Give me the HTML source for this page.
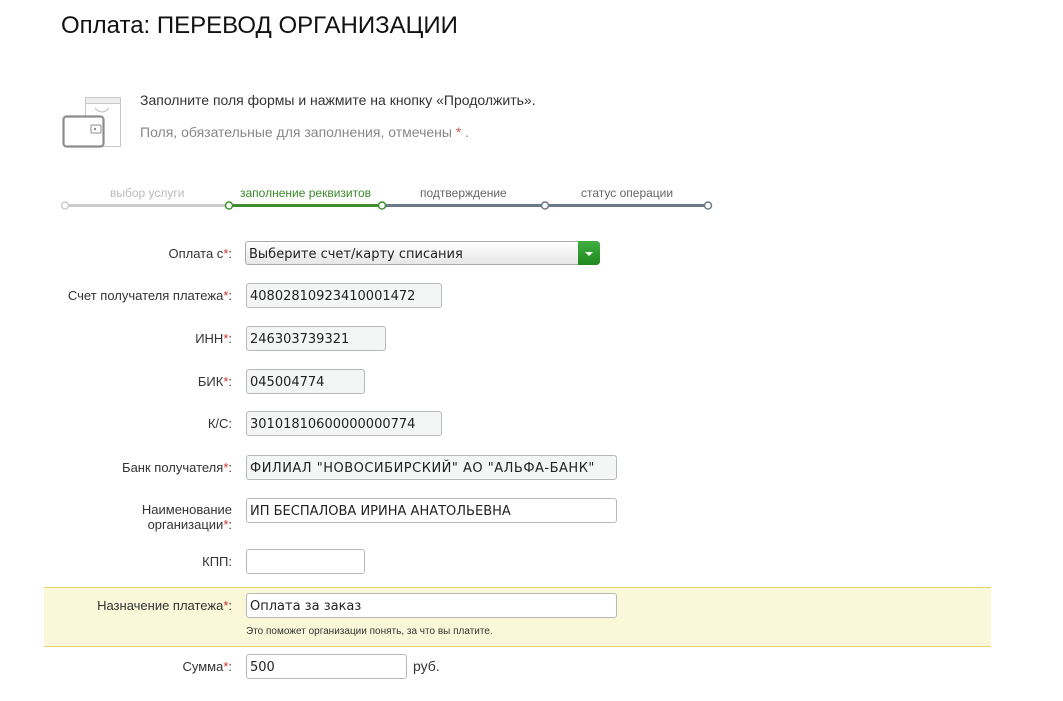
<!DOCTYPE html>
<html><head><meta charset="utf-8">
<style>
body{margin:0;width:1063px;height:701px;background:#fff;font-family:"Liberation Sans",sans-serif;position:relative;overflow:hidden;color:#333}
.a{position:absolute}
.lbl{position:absolute;right:831px;font-size:13px;color:#333;text-align:right;line-height:15px}
.lbl b{color:#d0302a;font-weight:normal}
.in{position:absolute;box-sizing:border-box;height:25px;border:1px solid #b8b8b8;border-radius:3px;background:#f4f5f5;line-height:23px;padding-left:3px;padding-top:1px;color:#222;font-family:"DejaVu Sans","Liberation Sans",sans-serif;font-size:13px}
.w{background:#fff}
</style></head><body>
<div class="a" style="left:61px;top:12px;font-size:24px;color:#111">Оплата: ПЕРЕВОД ОРГАНИЗАЦИИ</div>
<svg class="a" style="left:60px;top:95px" width="64" height="55" viewBox="0 0 64 55">
<rect x="25.5" y="2.5" width="35" height="49" fill="#fff" stroke="#c8c8c8"/>
<rect x="25.5" y="2.5" width="35" height="6" fill="#eee" stroke="#c8c8c8"/>
<path d="M35 13 Q42 21 49 13" fill="none" stroke="#bbb"/>
<rect x="3.5" y="21.5" width="40" height="30" rx="3" fill="#fff" stroke="#8c8c8c" stroke-width="2.2"/>
<rect x="31" y="30" width="10" height="8" rx="1" fill="#fff" stroke="#8c8c8c"/>
<circle cx="35" cy="34" r="1.2" fill="#8c8c8c"/>
</svg>
<div class="a" style="left:140px;top:92px;font-size:14px;color:#333">Заполните поля формы и нажмите на кнопку «Продолжить».</div>
<div class="a" style="left:140px;top:124px;font-size:14px;color:#888">Поля, обязательные для заполнения, отмечены <span style="color:#e05050">*</span> .</div>
<div class="a" style="left:110px;top:186px;font-size:12px;color:#bbb">выбор услуги</div>
<div class="a" style="left:240px;top:186px;font-size:12px;color:#3a8a2a">заполнение реквизитов</div>
<div class="a" style="left:420px;top:186px;font-size:12px;color:#666">подтверждение</div>
<div class="a" style="left:581px;top:186px;font-size:12px;color:#666">статус операции</div>
<svg class="a" style="left:58px;top:198px" width="660" height="16">
<line x1="7" y1="7.5" x2="171" y2="7.5" stroke="#ccc" stroke-width="3"/>
<line x1="171" y1="7.5" x2="324" y2="7.5" stroke="#3f8f2f" stroke-width="3"/>
<line x1="324" y1="7.5" x2="650" y2="7.5" stroke="#6b7a86" stroke-width="3"/>
<circle cx="7" cy="7.5" r="3.5" fill="#fff" stroke="#ccc" stroke-width="1.5"/>
<circle cx="171" cy="7.5" r="3.5" fill="#fff" stroke="#3f8f2f" stroke-width="1.5"/>
<circle cx="324" cy="7.5" r="3.5" fill="#fff" stroke="#3f8f2f" stroke-width="1.5"/>
<circle cx="487" cy="7.5" r="3.5" fill="#fff" stroke="#6b7a86" stroke-width="1.5"/>
<circle cx="650" cy="7.5" r="3.5" fill="#fff" stroke="#6b7a86" stroke-width="1.5"/>
</svg>
<div class="lbl" style="top:246px">Оплата с<b>*</b>:</div>
<div class="in" style="left:245px;top:241px;width:355px;height:24px;background:linear-gradient(#fff,#e6e6e6);border-color:#aaa">Выберите счет/карту списания</div>
<div class="a" style="left:578px;top:241px;width:22px;height:24px;border-radius:0 4px 4px 0;background:linear-gradient(#3fae3f,#1f8a1f)"><svg width="22" height="24"><path d="M7 11 L15 11 L11 15Z" fill="#fff"/></svg></div>
<div class="lbl" style="top:288px">Счет получателя платежа<b>*</b>:</div>
<div class="in" style="left:246px;top:283px;width:196px">40802810923410001472</div>
<div class="lbl" style="top:331px">ИНН<b>*</b>:</div>
<div class="in" style="left:246px;top:326px;width:140px">246303739321</div>
<div class="lbl" style="top:374px">БИК<b>*</b>:</div>
<div class="in" style="left:246px;top:369px;width:119px">045004774</div>
<div class="lbl" style="top:416px">К/С:</div>
<div class="in" style="left:246px;top:411px;width:196px">30101810600000000774</div>
<div class="lbl" style="top:460px">Банк получателя<b>*</b>:</div>
<div class="in" style="left:246px;top:455px;width:371px;letter-spacing:0.5px">ФИЛИАЛ "НОВОСИБИРСКИЙ" АО "АЛЬФА-БАНК"</div>
<div class="lbl" style="top:502px">Наименование<br>организации<b>*</b>:</div>
<div class="in w" style="left:246px;top:498px;width:371px">ИП БЕСПАЛОВА ИРИНА АНАТОЛЬЕВНА</div>
<div class="lbl" style="top:554px">КПП:</div>
<div class="in w" style="left:246px;top:549px;width:119px"></div>
<div class="a" style="left:44px;top:587px;width:947px;height:58px;background:#fbf8d9;border-top:1px solid #e8d070;border-bottom:1px solid #e8d070"></div>
<div class="lbl" style="top:598px">Назначение платежа<b>*</b>:</div>
<div class="in w" style="left:246px;top:593px;width:371px">Оплата за заказ</div>
<div class="a" style="left:246px;top:626px;font-size:10px;color:#333">Это поможет организации понять, за что вы платите.</div>
<div class="lbl" style="top:659px">Сумма<b>*</b>:</div>
<div class="in w" style="left:246px;top:654px;width:161px">500</div>
<div class="a" style="left:413px;top:658px;font-size:14px;color:#333">руб.</div>
</body></html>
